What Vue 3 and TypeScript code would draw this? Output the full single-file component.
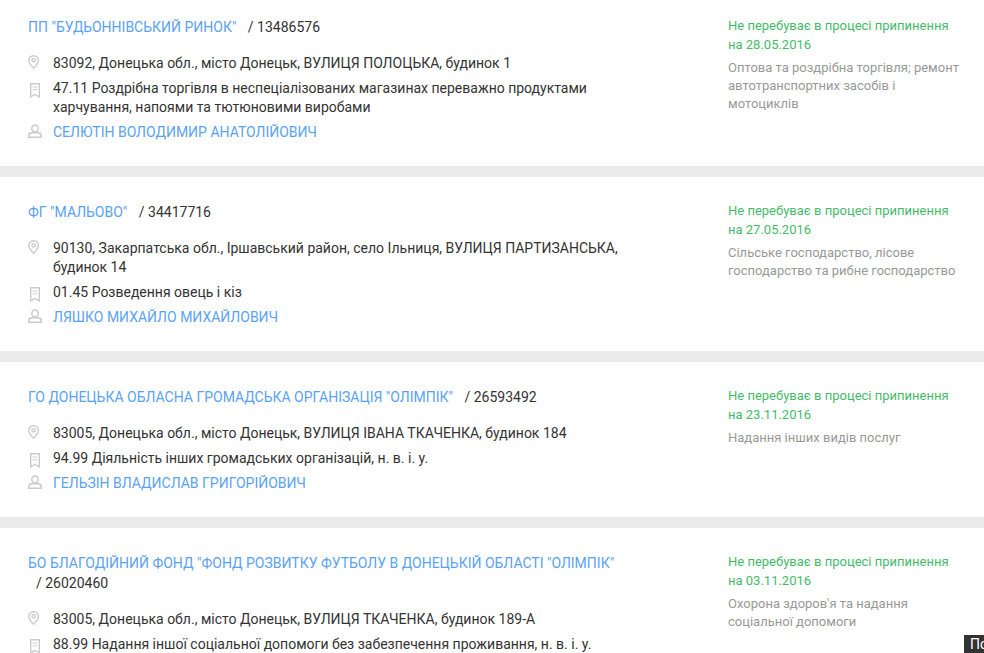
<script setup lang="ts">
interface Company {
  name: string
  code: string
  address: string
  activity: string
  person?: string
  date: string
  sector: string
}

const companies: Company[] = [
  {
    name: 'ПП "БУДЬОННІВСЬКИЙ РИНОК"',
    code: '/ 13486576',
    address: '83092, Донецька обл., місто Донецьк, ВУЛИЦЯ ПОЛОЦЬКА, будинок 1',
    activity: '47.11 Роздрібна торгівля в неспеціалізованих магазинах переважно продуктами харчування, напоями та тютюновими виробами',
    person: 'СЕЛЮТІН ВОЛОДИМИР АНАТОЛІЙОВИЧ',
    date: 'на 28.05.2016',
    sector: 'Оптова та роздрібна торгівля; ремонт автотранспортних засобів і мотоциклів',
  },
  {
    name: 'ФГ "МАЛЬОВО"',
    code: '/ 34417716',
    address: '90130, Закарпатська обл., Іршавський район, село Ільниця, ВУЛИЦЯ ПАРТИЗАНСЬКА, будинок 14',
    activity: '01.45 Розведення овець і кіз',
    person: 'ЛЯШКО МИХАЙЛО МИХАЙЛОВИЧ',
    date: 'на 27.05.2016',
    sector: 'Сільське господарство, лісове господарство та рибне господарство',
  },
  {
    name: 'ГО ДОНЕЦЬКА ОБЛАСНА ГРОМАДСЬКА ОРГАНІЗАЦІЯ "ОЛІМПІК"',
    code: '/ 26593492',
    address: '83005, Донецька обл., місто Донецьк, ВУЛИЦЯ ІВАНА ТКАЧЕНКА, будинок 184',
    activity: '94.99 Діяльність інших громадських організацій, н. в. і. у.',
    person: 'ГЕЛЬЗІН ВЛАДИСЛАВ ГРИГОРІЙОВИЧ',
    date: 'на 23.11.2016',
    sector: 'Надання інших видів послуг',
  },
  {
    name: 'БО БЛАГОДІЙНИЙ ФОНД "ФОНД РОЗВИТКУ ФУТБОЛУ В ДОНЕЦЬКІЙ ОБЛАСТІ "ОЛІМПІК"',
    code: '/ 26020460',
    address: '83005, Донецька обл., місто Донецьк, ВУЛИЦЯ ТКАЧЕНКА, будинок 189-А',
    activity: '88.99 Надання іншої соціальної допомоги без забезпечення проживання, н. в. і. у.',
    date: 'на 03.11.2016',
    sector: 'Охорона здоров\'я та надання соціальної допомоги',
  },
]
</script>

<template>
  <div class="page">
    <section v-for="c in companies" :key="c.code" class="card">
      <div class="main">
        <h3 class="title">
          <a class="link">{{ c.name }}</a>
          {{ ' ' }}
          <span class="code">{{ c.code }}</span>
        </h3>
        <div class="row">
          <svg class="icon" width="16" height="18" viewBox="0 0 16 18" fill="none" stroke="#cbcbcb" stroke-width="1.4">
            <path d="M5.600 0.800C2.800 0.800 0.800 2.800 0.800 5.400c0 2.800 2.800 5.600 4.800 7.800 2-2.200 4.800-5 4.800-7.800 0-2.600-2-4.600-4.800-4.600z" />
            <circle cx="5.600" cy="5.300" r="1.700" />
          </svg>
          <span>{{ c.address }}</span>
        </div>
        <div class="row">
          <svg class="icon" width="16" height="18" viewBox="0 0 16 18" fill="none" stroke="#cbcbcb" stroke-width="1.4">
            <path d="M2.700 3.700h8.600v13.200l-4.300-2.400-4.300 2.400z" />
            <path d="M4.700 7h4.600M4.700 9.800h4.600" stroke-width="1.100" />
          </svg>
          <span>{{ c.activity }}</span>
        </div>
        <div v-if="c.person" class="row">
          <svg class="icon" width="16" height="18" viewBox="0 0 16 18" fill="none" stroke="#cbcbcb" stroke-width="1.500">
            <ellipse cx="7" cy="4.400" rx="3.200" ry="3.500" />
            <path d="M0.800 13.200v-1.700c0-1.600 1.700-2.700 3.400-2.700h5.600c1.700 0 3.400 1.100 3.400 2.700v1.700z" />
          </svg>
          <a class="link">{{ c.person }}</a>
        </div>
      </div>
      <aside class="side">
        <div class="status">Не перебуває в процесі припинення<br />{{ c.date }}</div>
        <div class="sector">{{ c.sector }}</div>
      </aside>
    </section>
    <div class="corner">По</div>
  </div>
</template>

<style scoped>
.page {
  margin-top: -8px;
  font-family: Roboto, "Liberation Sans", sans-serif;
  font-size: 14px;
  color: #333;
}
.card {
  display: flex;
  justify-content: space-between;
  background: #fff;
  padding: 25px 20px 24px 28px;
  margin-bottom: 11px;
}
.main {
  width: 640px;
}
.title {
  margin: 0 0 17px;
  font-size: 14px;
  font-weight: 400;
  line-height: 20px;
}
.code {
  display: inline-block;
  padding-left: 8px;
}
.link {
  color: #5aa2f5;
}
.row {
  display: flex;
  line-height: 19px;
  margin-bottom: 6px;
}
.row:last-child {
  margin-bottom: 0;
}
.icon {
  flex: none;
  margin: 1px 9px 0 0;
}
.side {
  width: 236px;
  margin-top: -1px;
  font-size: 13px;
}
.status {
  color: #45bb6a;
  line-height: 19px;
  margin-bottom: 5px;
}
.sector {
  color: #999;
  line-height: 18px;
}
.corner {
  position: fixed;
  right: 0;
  bottom: 0;
  width: 20px;
  height: 18px;
  overflow: hidden;
  padding-left: 6px;
  box-sizing: border-box;
  background: #333;
  color: #fff;
  font-size: 14px;
  line-height: 18px;
  white-space: nowrap;
}
</style>

<style>
html,
body {
  margin: 0;
  background: #ebebeb;
  overflow: hidden;
}
</style>
